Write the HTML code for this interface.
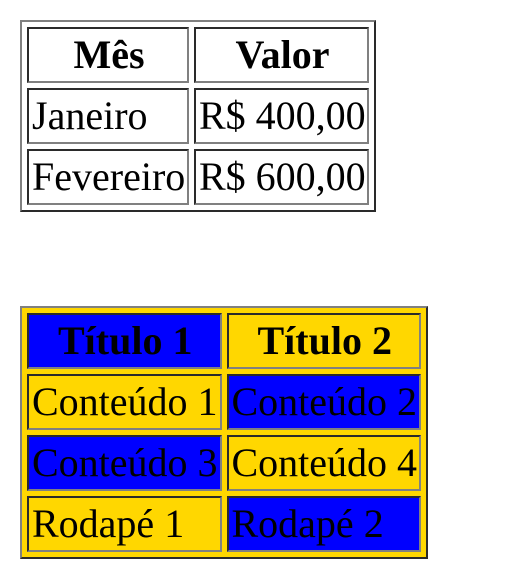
<!DOCTYPE html>
<html><head><meta charset="utf-8"><style>
html,body{margin:0;padding:0;background:#fff;}
body{font-family:"Liberation Serif",serif;font-size:40px;color:#000;}
table{position:absolute;border-collapse:separate;border-spacing:5px;border:2px solid;border-color:#808080 #2a2a2a #2a2a2a #808080;table-layout:fixed;}
td,th{box-sizing:border-box;height:56px;border:2px solid;border-color:#2a2a2a #808080 #808080 #2a2a2a;padding:0 1px 0 3px;white-space:nowrap;line-height:46px;overflow:hidden;}
th{text-align:center;font-weight:bold;}
td{text-align:left;}
#t2{left:20px;top:306px;background:#ffd700;}
.b{background:#0000ff;}
.y{background:#ffd700;}
</style></head><body>
<table id="t1" style="left:20px;top:20px;margin:0;width:356px;height:192px;">
<colgroup><col style="width:162px"><col style="width:175px"></colgroup>
<tr><th>Mês</th><th>Valor</th></tr>
<tr><td>Janeiro</td><td>R$ 400,00</td></tr>
<tr><td>Fevereiro</td><td>R$ 600,00</td></tr>
</table>
<table id="t2" style="width:408px;height:253px;">
<colgroup><col style="width:194px"><col style="width:194px"></colgroup>
<tr><th class="b">Título 1</th><th class="y">Título 2</th></tr>
<tr><td class="y">Conteúdo 1</td><td class="b">Conteúdo 2</td></tr>
<tr><td class="b">Conteúdo 3</td><td class="y">Conteúdo 4</td></tr>
<tr><td class="y">Rodapé 1</td><td class="b">Rodapé 2</td></tr>
</table>
</body></html>
